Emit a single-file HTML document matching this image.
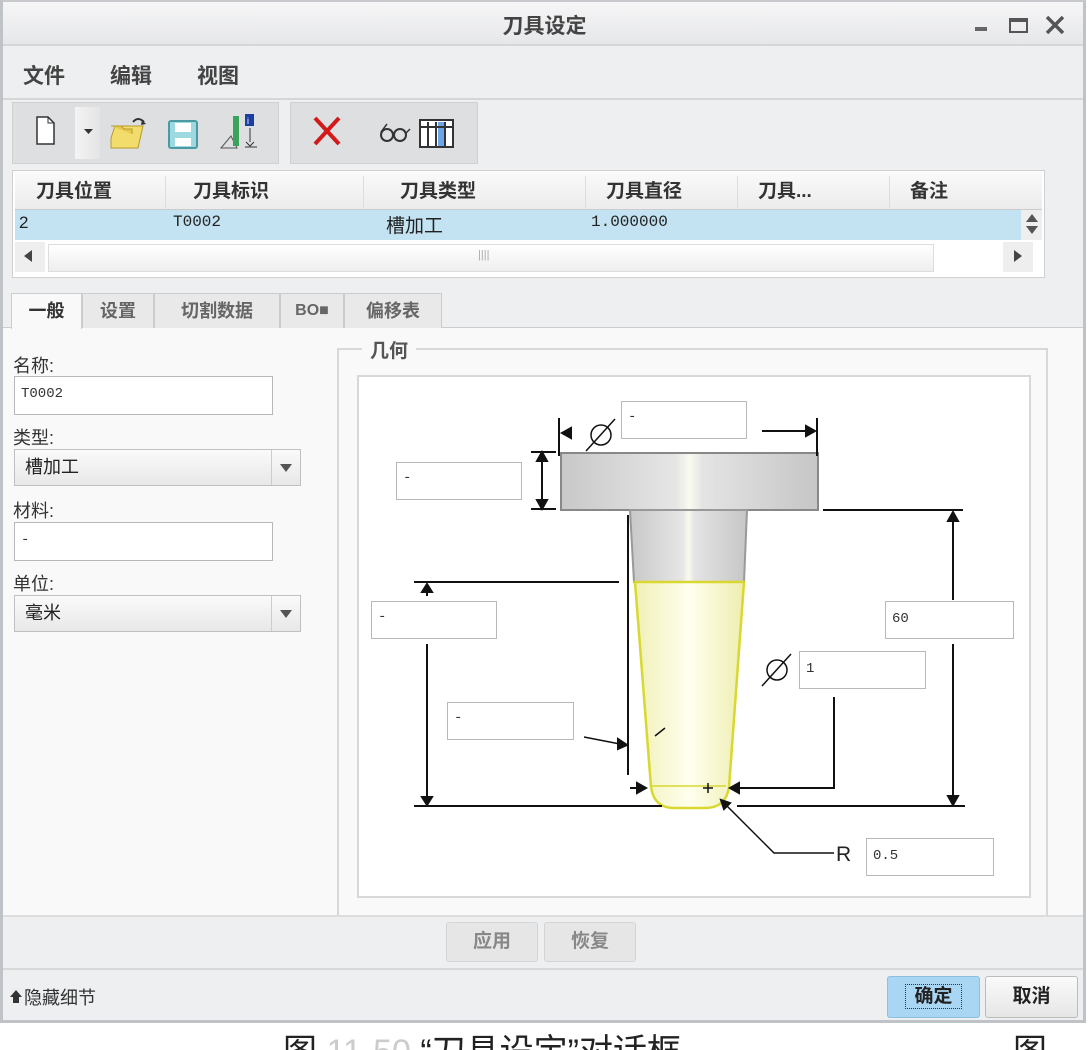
<!DOCTYPE html>
<html><head><meta charset="utf-8">
<style>
*{box-sizing:border-box;margin:0;padding:0}
body{width:1089px;height:1050px;background:#fff;position:relative;overflow:hidden;font-family:"Liberation Sans","Noto Sans CJK SC",sans-serif;color:#222}
.a{position:absolute}
.b{font-weight:bold}
.inp{position:absolute;background:#fff;border:1px solid #b8b8b8;font-family:"Liberation Mono","Noto Sans CJK SC",monospace;font-size:14px;color:#333;padding-left:6px;line-height:34px}
.lbl{position:absolute;font-size:18px;color:#333}
.sel{position:absolute;background:linear-gradient(#fafafa,#e8e8e8);border:1px solid #c0c0c0;font-size:18px;padding-left:10px;line-height:34px}
.sel:after{content:"";position:absolute;right:0;top:0;width:28px;height:100%;border-left:1px solid #ccc}
.tri{position:absolute;right:8px;top:14px;width:0;height:0;border-left:6px solid transparent;border-right:6px solid transparent;border-top:8px solid #555;z-index:2}
.th{position:absolute;top:176px;font-size:19px;font-weight:bold;color:#333}
.tab{position:absolute;top:293px;height:35px;background:#e9e9e9;border:1px solid #ccc;border-bottom:none;font-size:18px;font-weight:bold;color:#666;text-align:center;line-height:34px}
</style></head><body>
<div class="a" style="left:0;top:0;width:1086px;height:1023px;background:#eeeff1;border:3px solid #bfc2c6;border-top:2px solid #c7c9cc"></div>
<div class="a" style="left:3px;top:2px;width:1080px;height:44px;background:linear-gradient(#f6f6f7,#e6e7e9);border-bottom:2px solid #d5d6d8"></div>
<div class="a b" style="left:0;width:1089px;top:10px;text-align:center;font-size:21px;color:#444">刀具设定</div>
<div class="a" style="left:975px;top:27px;width:12px;height:4px;background:#666"></div>
<div class="a" style="left:1009px;top:18px;width:19px;height:15px;border:2px solid #555;border-top-width:4px"></div>
<svg class="a" style="left:1045px;top:16px" width="20" height="18"><path d="M2 1l16 16M18 1L2 17" stroke="#555" stroke-width="3.5"/></svg>
<div class="a b" style="left:23px;top:60px;font-size:21px;color:#444">文件</div>
<div class="a b" style="left:110px;top:60px;font-size:21px;color:#444">编辑</div>
<div class="a b" style="left:197px;top:60px;font-size:21px;color:#444">视图</div>
<div class="a" style="left:3px;top:98px;width:1080px;height:2px;background:#d6d6d6"></div>
<div class="a" style="left:12px;top:102px;width:267px;height:62px;background:#dedfe1;border:1px solid #d0d0d0"></div>
<div class="a" style="left:290px;top:102px;width:188px;height:62px;background:#dedfe1;border:1px solid #d0d0d0"></div>
<div class="a" style="left:75px;top:107px;width:25px;height:52px;background:linear-gradient(90deg,#f4f4f4,#e4e4e4)"></div>
<svg class="a" style="left:0;top:100px" width="500" height="66">
<path d="M37 17h11l6 6v21H37z" fill="#fff" stroke="#333" stroke-width="1.5"/><path d="M48 17v6h6" fill="none" stroke="#333"/>
<path d="M84 29h9l-4.5 5z" fill="#333"/>
<path d="M111 38l4-12h28l-5 22h-27z" fill="#f2dc6c" stroke="#b59a2a"/><path d="M111 26h10l3 3h8v5" fill="#e8c94e" stroke="#b59a2a"/><path d="M133 22q5-6 11 0" fill="none" stroke="#333" stroke-width="2"/><path d="M142 20l4 4-5 1z" fill="#333"/>
<rect x="169" y="21" width="28" height="27" rx="2" fill="#9ed9df" stroke="#4a9aa3" stroke-width="2"/><rect x="175" y="23" width="16" height="9" fill="#fff"/><rect x="175" y="38" width="16" height="8" fill="#fff"/>
<path d="M221 48l10-12 6 12z" fill="none" stroke="#555"/><rect x="233" y="16" width="6" height="30" fill="#3aa55a"/><rect x="245" y="14" width="9" height="12" fill="#1a3fa0"/><text x="247" y="24" font-size="9" fill="#fff" font-family="Liberation Sans">i</text><path d="M250 28v14M245 47h12M246 42l4 4 4-4" stroke="#333" fill="none"/>
<path d="M315 18l24 26M339 18l-24 26" stroke="#d21a1a" stroke-width="4"/>
<circle cx="387" cy="35" r="6" fill="none" stroke="#333" stroke-width="2"/><circle cx="400" cy="35" r="6" fill="none" stroke="#333" stroke-width="2"/><path d="M381 32l6-8M406 33l4-4" stroke="#333" stroke-width="1.5"/>
<rect x="420" y="20" width="33" height="27" fill="#fff" stroke="#333" stroke-width="2"/><rect x="438" y="22" width="7" height="24" fill="#6da6e8"/><path d="M420 27h33M428 22v25M436 22v25M445 22v25" stroke="#333" stroke-width="2"/>
</svg>
<div class="a" style="left:12px;top:170px;width:1033px;height:108px;background:#fff;border:1px solid #d0d0d0"></div>
<div class="a" style="left:15px;top:172px;width:1027px;height:38px;background:linear-gradient(#fafafa,#ececec);border-bottom:1px solid #ccc"></div>
<div class="th" style="left:36px">刀具位置</div>
<div class="th" style="left:193px">刀具标识</div>
<div class="th" style="left:400px">刀具类型</div>
<div class="th" style="left:606px">刀具直径</div>
<div class="th" style="left:758px">刀具...</div>
<div class="th" style="left:910px">备注</div>
<div class="a" style="left:165px;top:176px;width:1px;height:32px;background:#ddd"></div>
<div class="a" style="left:363px;top:176px;width:1px;height:32px;background:#ddd"></div>
<div class="a" style="left:585px;top:176px;width:1px;height:32px;background:#ddd"></div>
<div class="a" style="left:737px;top:176px;width:1px;height:32px;background:#ddd"></div>
<div class="a" style="left:889px;top:176px;width:1px;height:32px;background:#ddd"></div>
<div class="a" style="left:15px;top:210px;width:1006px;height:30px;background:#c3e2f2"></div>
<div class="a" style="left:1021px;top:210px;width:21px;height:30px;background:#eee"></div>
<div class="a" style="left:1026px;top:214px;border:6px solid transparent;border-bottom:8px solid #555;border-top:none"></div>
<div class="a" style="left:1026px;top:226px;border:6px solid transparent;border-top:8px solid #555;border-bottom:none"></div>
<div class="a" style="left:19px;top:213px;font-size:17px">2</div>
<div class="a" style="left:173px;top:213px;font-size:16px;font-family:'Liberation Mono',monospace">T0002</div>
<div class="a" style="left:386px;top:211px;font-size:19px">槽加工</div>
<div class="a" style="left:591px;top:213px;font-size:16px;font-family:'Liberation Mono',monospace">1.000000</div>
<div class="a" style="left:15px;top:242px;width:30px;height:30px;background:#eee"></div>
<div class="a" style="left:24px;top:250px;border:6px solid transparent;border-right:8px solid #444;border-left:none"></div>
<div class="a" style="left:48px;top:244px;width:886px;height:28px;background:linear-gradient(#fff,#eee);border:1px solid #ddd"></div>
<div class="a" style="left:478px;top:249px;font-size:11px;color:#aaa">||||</div>
<div class="a" style="left:1003px;top:242px;width:30px;height:30px;background:#eee"></div>
<div class="a" style="left:1014px;top:250px;border:6px solid transparent;border-left:8px solid #444;border-right:none"></div>
<div class="a" style="left:3px;top:327px;width:1080px;height:588px;background:#f9f9f9;border-top:1px solid #ccc"></div>
<div class="tab" style="left:11px;width:71px;background:#f9f9f9;color:#333;height:36px">一般</div>
<div class="tab" style="left:82px;width:72px">设置</div>
<div class="tab" style="left:154px;width:126px">切割数据</div>
<div class="tab" style="left:280px;width:64px;font-size:16px">BO■</div>
<div class="tab" style="left:344px;width:98px">偏移表</div>
<div class="lbl" style="left:13px;top:352px">名称:</div>
<div class="inp" style="left:14px;top:376px;width:259px;height:39px">T0002</div>
<div class="lbl" style="left:13px;top:424px">类型:</div>
<div class="sel" style="left:14px;top:449px;width:287px;height:37px">槽加工<span class="tri"></span></div>
<div class="lbl" style="left:13px;top:497px">材料:</div>
<div class="inp" style="left:14px;top:522px;width:259px;height:39px">-</div>
<div class="lbl" style="left:13px;top:570px">单位:</div>
<div class="sel" style="left:14px;top:595px;width:287px;height:37px">毫米<span class="tri"></span></div>
<div class="a" style="left:337px;top:348px;width:711px;height:567px;border:2px solid #d8d8d8;border-bottom:none"></div>
<div class="a b" style="left:362px;top:336px;font-size:19px;color:#555;background:#f9f9f9;padding:0 8px">几何</div>
<div class="a" style="left:357px;top:375px;width:674px;height:523px;background:#fff;border:2px solid #d8d8d8"></div>
<svg class="a" style="left:357px;top:375px" width="674" height="523">
<defs>
<linearGradient id="g1" x1="0" x2="1"><stop offset="0" stop-color="#c8c8c8"/><stop offset=".45" stop-color="#e6e6e6"/><stop offset=".5" stop-color="#fafaf0"/><stop offset=".55" stop-color="#e4e4e4"/><stop offset="1" stop-color="#c6c6c6"/></linearGradient>
<linearGradient id="g2" x1="0" x2="1"><stop offset="0" stop-color="#f0f0b8"/><stop offset=".5" stop-color="#ffffee"/><stop offset="1" stop-color="#eeeeb0"/></linearGradient>
</defs>
<g transform="translate(-357,-375)" stroke="#111" stroke-width="2" fill="none">
<rect x="561" y="453" width="257" height="57" fill="url(#g1)" stroke="#888"/>
<path d="M630 510h117l-3 72h-110z" fill="url(#g1)" stroke="#999"/>
<path d="M635 582h109l-15 205q-3 21-24 21h-31q-20 0-23-21z" fill="url(#g2)" stroke="#d8d830" stroke-width="2.5"/>
<path d="M652 786h74" stroke="#d8d830" stroke-width="1.5"/>
<path d="M559 418v38M817 418v38M562 433h10M762 431h52"/>
<path d="M562 433l9-5v10z M815 431l-9-5v10z" fill="#111"/>
<path d="M531 452h25M531 509h25M542 454v53"/>
<path d="M542 452l-5 9h10z M542 509l-5-9h10z" fill="#111"/>
<path d="M823 510h140M737 806h228M953 512v88M953 644v160"/>
<path d="M953 512l-5 9h10z M953 805l-5-9h10z" fill="#111"/>
<path d="M414 582h205M414 806h248M427 586v10M427 644v158M628 515v260"/>
<path d="M427 584l-5 8h10z M427 805l-5-8h10z" fill="#111"/>
<path d="M584 737l36 7M665 728l-10 8" stroke-width="1.5"/>
<path d="M627 745l-9-6v10z" fill="#111"/>
<path d="M630 788h12M736 788h98V697" />
<path d="M646 788l-9-5v10z M730 788l9-5v10z" fill="#111"/>
<path d="M708 783v10M703 788h10" stroke-width="1.5"/>
<path d="M724 803l50 50h60" stroke-width="1.5"/>
<path d="M721 800l3 9 6-6z" fill="#111"/>
<circle cx="777" cy="670" r="10" stroke-width="1.5"/><path d="M762 686l29-32" stroke-width="1.5"/>
<circle cx="601" cy="435" r="10" stroke-width="1.5"/><path d="M586 451l29-32" stroke-width="1.5"/>
</g>
</svg>
<div class="a" style="left:836px;top:843px;font-size:21px;color:#222">R</div>
<div class="inp" style="left:621px;top:401px;width:126px;height:38px;line-height:30px">-</div>
<div class="inp" style="left:396px;top:462px;width:126px;height:38px;line-height:30px">-</div>
<div class="inp" style="left:371px;top:601px;width:126px;height:38px;line-height:30px">-</div>
<div class="inp" style="left:885px;top:601px;width:129px;height:38px">60</div>
<div class="inp" style="left:799px;top:651px;width:127px;height:38px">1</div>
<div class="inp" style="left:447px;top:702px;width:127px;height:38px;line-height:30px">-</div>
<div class="inp" style="left:866px;top:838px;width:128px;height:38px">0.5</div>
<div class="a" style="left:3px;top:915px;width:1080px;height:2px;background:#ddd"></div>
<div class="a b" style="left:446px;top:922px;width:92px;height:40px;background:#e6e6e6;border:1px solid #d4d4d4;border-radius:3px;font-size:19px;color:#888;text-align:center;line-height:38px">应用</div>
<div class="a b" style="left:544px;top:922px;width:92px;height:40px;background:#e6e6e6;border:1px solid #d4d4d4;border-radius:3px;font-size:19px;color:#888;text-align:center;line-height:38px">恢复</div>
<div class="a" style="left:3px;top:968px;width:1080px;height:2px;background:#d8d8d8"></div>
<div class="a" style="left:10px;top:990px;border:6px solid transparent;border-bottom:7px solid #333;border-top:none"></div>
<div class="a" style="left:13px;top:997px;width:6px;height:6px;background:#333"></div>
<div class="a" style="left:24px;top:984px;font-size:18px;color:#333">隐藏细节</div>
<div class="a b" style="left:887px;top:976px;width:93px;height:42px;background:#a9d6f2;border:1px solid #8cbfe0;border-radius:3px;font-size:19px;text-align:center;line-height:40px;color:#222"><span style="border:1px dotted #333;padding:1px 8px">确定</span></div>
<div class="a b" style="left:985px;top:976px;width:93px;height:42px;background:linear-gradient(#fafafa,#e6e6e6);border:1px solid #bbb;border-radius:3px;font-size:19px;text-align:center;line-height:40px;color:#222">取消</div>
<div class="a" style="left:0;top:1026px;width:1089px;height:24px;background:#fff;overflow:hidden">
<div class="a" style="left:283px;top:6px;font-size:34px;line-height:40px;color:#222;white-space:nowrap">图 <span style="color:#ccc">11-50</span> “刀具设定”对话框</div>
<div class="a" style="left:1013px;top:6px;font-size:34px;line-height:40px;color:#222">图 11</div>
</div>
</body></html>
